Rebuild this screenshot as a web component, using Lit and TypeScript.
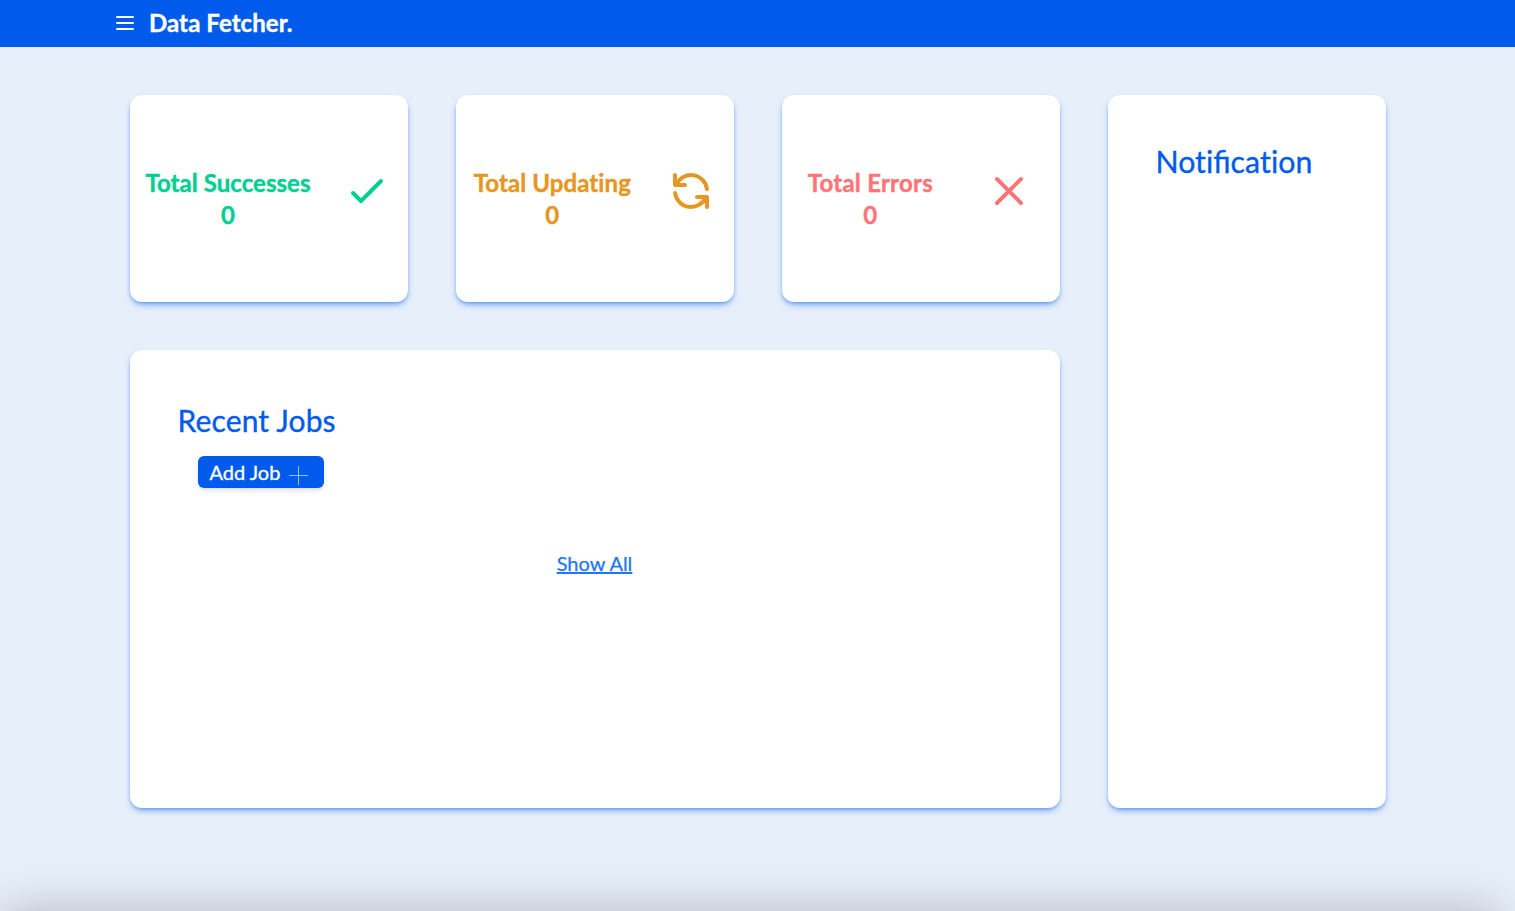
import { LitElement, html, css, svg } from "lit";
import { customElement, property } from "lit/decorators.js";

const icons: Record<string, unknown> = {
  success: svg`<path d="M5 13l4 4L19 7"/>`,
  updating: svg`<path d="M4 4v5h.582m15.356 2A8.001 8.001 0 004.582 9m0 0H9m11 11v-5h-.581m0 0a8.003 8.003 0 01-15.357-2m15.357 2H15"/>`,
  error: svg`<path d="M6 18L18 6M6 6l12 12"/>`,
};

@customElement("stat-card")
class StatCard extends LitElement {
  @property() kind = "success";
  @property() label = "";
  @property({ type: Number }) value = 0;

  static styles = css`
    :host { display: block; background: #fff; border-radius: 12px;
      box-shadow: 0 4px 6px -1px #3c83f680, 0 2px 4px -2px #3c83f6; }
    .body { display: flex; justify-content: space-around; padding-top: 72px; }
    .text { text-align: center; font-weight: 700; font-size: 24px; line-height: 32px; white-space: nowrap;
      font-variant-ligatures: none; -webkit-text-stroke: 0.4px currentColor; }
    svg { width: 48px; height: 48px; fill: none; stroke: currentColor; stroke-width: 2;
      stroke-linecap: round; stroke-linejoin: round; }
    .success { color: #00cf91; letter-spacing: 0.04px; padding-right: 1px; }
    .updating { color: #e69723; letter-spacing: 0.1px; }
    .error { color: #ff7478; letter-spacing: 0.25px; }
  `;

  render() {
    return html`<div class="body ${this.kind}">
      <div class="text"><div>${this.label}</div><div>${this.value}</div></div>
      <svg viewBox="0 0 24 24">${icons[this.kind]}</svg>
    </div>`;
  }
}

@customElement("app-root")
class AppRoot extends LitElement {
  static styles = css`
    :host { display: block; position: relative; height: 911px; overflow: hidden;
      background: #e7effa; font-family: Lato, sans-serif; color: #005bed; }
    header { display: flex; align-items: center; height: 47px; padding-left: 113px;
      gap: 12px; background: #005bed; color: #fff; }
    .menu { width: 24px; height: 24px; fill: none; stroke: #fff; stroke-width: 2; stroke-linecap: round; margin-top: -1px; }
    .brand { font-size: 24px; line-height: 32px; font-weight: 700; margin-top: -1px;
      letter-spacing: 0.08px; -webkit-text-stroke: 0.4px currentColor; }
    main { display: grid; grid-template-columns: repeat(4, 278px); grid-template-rows: 207px 458px;
      gap: 48px; padding: 48px 0 0 129.5px; }
    .panel { background: #fff; border-radius: 12px; box-sizing: border-box; padding: 48px;
      box-shadow: 0 4px 6px -1px #3c83f680, 0 2px 4px -2px #3c83f6; }
    .jobs { grid-column: 1 / 4; grid-row: 2; padding-top: 52px; }
    .notes { grid-column: 4; grid-row: 1 / 3; }
    h2 { margin: 0; font-weight: 400; font-size: 30px; line-height: 36px; -webkit-text-stroke: 0.35px currentColor; }
    .jobs h2 { letter-spacing: 0.15px; }
    .notes h2 { font-size: 30.3px; }
    .loose { font-variant-ligatures: none; }
    .add { display: flex; align-items: center; width: 126px; height: 32px; box-sizing: border-box;
      margin: 18px 0 0 20px; padding: 0 0 0 12px; gap: 8.6px; border: 0; border-radius: 6px;
      background: #005bed; color: #fff; font: 400 20px/28px Lato, sans-serif;
      -webkit-text-stroke: 0.3px currentColor;
      box-shadow: 0 4px 6px -1px #0000001a, 0 2px 4px -2px #0000001a; }
    .plus { width: 19px; height: 19px; margin-top: 6px; stroke: #fff; opacity: .6; }
    .all { text-align: center; margin-top: 61px; font-size: 20px; line-height: 28px;
      color: #2176f5; text-decoration: underline; -webkit-text-stroke: 0.25px currentColor; }
    .shade { position: absolute; left: -10px; right: 3px; top: 911px; height: 300px;
      box-shadow: 0 -12px 44px -12px #0000003c; }
  `;

  render() {
    return html`
      <header>
        <svg class="menu" viewBox="0 0 24 24"><path d="M4 6h16M4 12h16M4 18h16"/></svg>
        <div class="brand">Data Fetcher.</div>
      </header>
      <main>
        <stat-card kind="success" label="Total Successes"></stat-card>
        <stat-card kind="updating" label="Total Updating"></stat-card>
        <stat-card kind="error" label="Total Errors"></stat-card>
        <section class="panel jobs">
          <h2>Recent Jobs</h2>
          <button class="add">Add Job<svg class="plus" viewBox="0 0 19 19"><path d="M0 9.5H19M9.5 0V19"/></svg></button>
          <div class="all">Show All</div>
        </section>
        <section class="panel notes"><h2><span class="loose">Not</span>ifica<span class="loose">tion</span></h2></section>
      </main>
      <div class="shade"></div>
    `;
  }
}
